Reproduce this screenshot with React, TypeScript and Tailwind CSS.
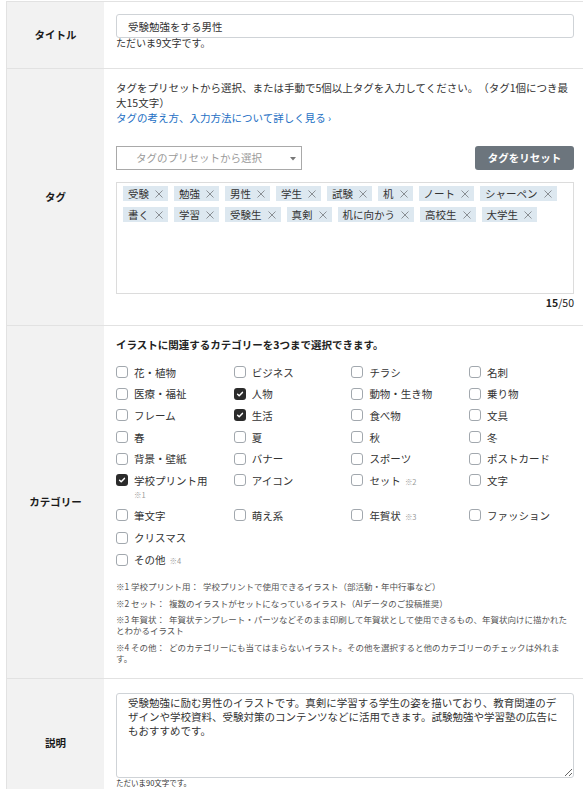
import React from "react";

const TAGS = ["受験","勉強","男性","学生","試験","机","ノート","シャーペン","書く","学習","受験生","真剣","机に向かう","高校生","大学生"];

type Cat = { label: string; checked?: boolean; note?: string; under?: string; newRow?: boolean };
const CATS: Cat[] = [
  { label: "花・植物" }, { label: "ビジネス" }, { label: "チラシ" }, { label: "名刺" },
  { label: "医療・福祉" }, { label: "人物", checked: true }, { label: "動物・生き物" }, { label: "乗り物" },
  { label: "フレーム" }, { label: "生活", checked: true }, { label: "食べ物" }, { label: "文具" },
  { label: "春" }, { label: "夏" }, { label: "秋" }, { label: "冬" },
  { label: "背景・壁紙" }, { label: "バナー" }, { label: "スポーツ" }, { label: "ポストカード" },
  { label: "学校プリント用", checked: true, under: "※1" }, { label: "アイコン" }, { label: "セット", note: "※2" }, { label: "文字" },
  { label: "筆文字" }, { label: "萌え系" }, { label: "年賀状", note: "※3" }, { label: "ファッション" },
  { label: "クリスマス" },
  { label: "その他", note: "※4", newRow: true },
];

function Box({ checked }: { checked?: boolean }) {
  if (checked) {
    return (
      <span className="mt-[1.5px] flex h-[12px] w-[12px] shrink-0 items-center justify-center rounded-[3px] bg-[#2b2b2b]">
        <svg width="8" height="8" viewBox="0 0 8 8">
          <path d="M1.6 4.3 L3.2 5.8 L6.4 2.4" stroke="white" strokeWidth="1.5" fill="none" strokeLinecap="round" strokeLinejoin="round" />
        </svg>
      </span>
    );
  }
  return <span className="mt-[1.5px] h-[12px] w-[12px] shrink-0 rounded-[3px] border border-[#a2a8ae] bg-white" />;
}

function Row({ label, children, className }: { label: string; children: React.ReactNode; className?: string }) {
  return (
    <div className="flex border-b border-[#e2e2e2]">
      <div className="flex w-[97px] shrink-0 items-center justify-center bg-[#f2f2f2] text-[10.5px] font-bold text-[#1a1a1a]">
        {label}
      </div>
      <div className={"min-w-0 flex-1 pl-[12px] pr-[9px] " + (className ?? "")}>{children}</div>
    </div>
  );
}

export default function App() {
  return (
    <div className="w-[583px] bg-white pl-[6px] pt-[1px] font-['Noto_Sans_CJK_JP',sans-serif] text-[#333] [text-spacing-trim:space-all]">
      <div className="border-l border-t border-[#e2e2e2]">
        <Row label="タイトル" className="pt-[12px] pb-[19px]">
          <input
            readOnly
            value="受験勉強をする男性"
            className="block h-[24px] w-full rounded-[3px] border border-[#cfd3d7] px-[11px] text-[10.5px] text-[#333] outline-none"
          />
          <div className="-mt-[1px] text-[10px] leading-[12px] text-[#333]">ただいま9文字です。</div>
        </Row>

        <Row label="タグ" className="pt-[11px] pb-[16px]">
          <p className="text-[10.5px] leading-[15px]">
            タグをプリセットから選択、または手動で5個以上タグを入力してください。（タグ1個につき最
            <br />
            大15文字）
          </p>
          <a className="block text-[10.5px] leading-[15px] text-[#1d6fc4]">
            タグの考え方、入力方法について詳しく見る <span className="text-[10px]">›</span>
          </a>
          <div className="mt-[21px] flex items-center justify-between">
            <div className="relative flex h-[24px] w-[186px] items-center border border-[#a9a9a9] bg-white pl-[19px] text-[10.5px] text-[#9a9a9a]">
              タグのプリセットから選択
              <svg className="absolute right-[5px] top-[10px]" width="6" height="4" viewBox="0 0 6 4">
                <path d="M0 0 L6 0 L3 3.5 Z" fill="#777" />
              </svg>
            </div>
            <button className="h-[24px] w-[99px] rounded-[3px] bg-[#6c757d] text-[10.5px] font-bold text-white">
              タグをリセット
            </button>
          </div>
          <div className="mt-[12px] h-[112px] border border-[#dcdcdc] px-[6px] pt-[3px]">
            <div className="flex flex-wrap gap-[6px]">
              {TAGS.map((t) => (
                <span key={t} className="flex h-[15px] items-center bg-[#dde8f0] pl-[5px] pr-[5px] text-[10.5px] leading-[15px] text-[#333]">
                  {t}
                  <svg className="ml-[6px]" width="8" height="8" viewBox="0 0 8 8">
                    <path d="M0.5 0.5 L7.5 7.5 M7.5 0.5 L0.5 7.5" stroke="#8a8f94" strokeWidth="1" />
                  </svg>
                </span>
              ))}
            </div>
          </div>
          <div className="mt-[2px] text-right text-[10.5px] leading-[13px] text-[#222]">
            <b>15</b>/50
          </div>
        </Row>

        <Row label="カテゴリー" className="pt-[11px] pb-[14px]">
          <p className="text-[10.5px] font-bold leading-[15px] text-[#222]">
            イラストに関連するカテゴリーを3つまで選択できます。
          </p>
          <div className="mt-[12.5px] grid grid-cols-[repeat(4,117.7px)] gap-y-[6.7px]">
            {CATS.map((c) => (
              <div key={c.label} className={"flex items-start gap-[6px] " + (c.newRow ? "col-start-1" : "")}>
                <Box checked={c.checked} />
                <div>
                  <div className="text-[10.5px] leading-[15px] text-[#333]">
                    {c.label}
                    {c.note && <span className="ml-[4px] text-[7.5px] text-[#999]">{c.note}</span>}
                  </div>
                  {c.under && <div className="text-[7.5px] leading-[13px] text-[#999]">{c.under}</div>}
                </div>
              </div>
            ))}
          </div>
          <div className="mt-[13px] text-[8.5px] leading-[11px] text-[#555]">
            <p className="mb-[5.5px]">※1 学校プリント用：&nbsp; 学校プリントで使用できるイラスト（部活動・年中行事など）</p>
            <p className="mb-[5.5px]">※2 セット：&nbsp; 複数のイラストがセットになっているイラスト（AIデータのご投稿推奨）</p>
            <p className="mb-[5.5px]">
              ※3 年賀状：&nbsp; 年賀状テンプレート・パーツなどそのまま印刷して年賀状として使用できるもの、年賀状向けに描かれた
              <br />
              とわかるイラスト
            </p>
            <p>
              ※4 その他：&nbsp; どのカテゴリーにも当てはまらないイラスト。その他を選択すると他のカテゴリーのチェックは外れま
              <br />
              す。
            </p>
          </div>
        </Row>

        <Row label="説明" className="pt-[14px] pb-[19px]">
          <textarea
            readOnly
            value="受験勉強に励む男性のイラストです。真剣に学習する学生の姿を描いており、教育関連のデザインや学校資料、受験対策のコンテンツなどに活用できます。試験勉強や学習塾の広告にもおすすめです。"
            className="block h-[85px] w-full resize-y rounded-[3px] border border-[#cfd3d7] px-[11px] pt-[2px] text-[10.5px] leading-[14px] text-[#333] outline-none"
          />
          <div className="text-[7.5px] leading-[10px] text-[#333]">ただいま90文字です。</div>
        </Row>
      </div>
    </div>
  );
}
